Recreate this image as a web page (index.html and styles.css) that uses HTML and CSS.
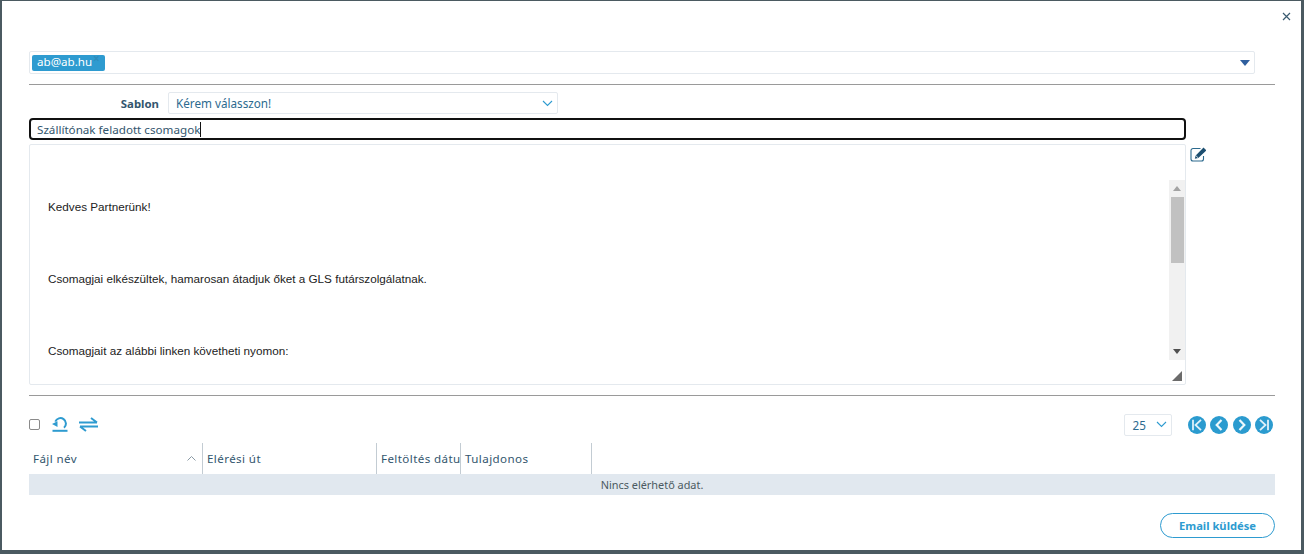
FILE: index.html
```html
<!DOCTYPE html>
<html lang="hu">
<head>
<meta charset="utf-8">
<title>Email küldése</title>
<link rel="stylesheet" href="styles.css">
</head>
<body>
<div class="modal">
  <div class="close-row">
    <svg class="close" width="9" height="9" viewBox="0 0 9 9"><path d="M1 1l7 7M8 1L1 8" stroke="#3b5b70" stroke-width="1.200" fill="none"/></svg>
  </div>
  <div class="recipients">
    <span class="tag">ab@ab.hu<span class="tag-x">×</span></span>
    <svg class="caret" width="10" height="6" viewBox="0 0 10 6"><path d="M0 0h10L5 6z" fill="#2f5f9e"/></svg>
  </div>
  <div class="rule rule-top"></div>
  <div class="template-row">
    <label class="template-label">Sablon</label>
    <div class="select template-select">
      <span>Kérem válasszon!</span>
      <svg width="11" height="7" viewBox="0 0 11 7"><path d="M1 1l4.500 4.500L10 1" stroke="#2e9bd0" stroke-width="1.100" fill="none"/></svg>
    </div>
  </div>
  <div class="subject"><span>Szállítónak feladott csomagok</span><span class="cursor"></span></div>
  <div class="editor-row">
    <div class="editor">
      <div class="editor-body">
        <div class="editor-text">
          <p>Kedves Partnerünk!</p>
          <p>Csomagjai elkészültek, hamarosan átadjuk őket a GLS futárszolgálatnak.</p>
          <p>Csomagjait az alábbi linken követheti nyomon:</p>
        </div>
        <div class="scrollbar">
          <svg class="sb-arrow" width="8" height="5" viewBox="0 0 8 5"><path d="M0 5h8L4 0z" fill="#a3a3a3"/></svg>
          <div class="sb-thumb"></div>
          <svg class="sb-arrow sb-down" width="8" height="5" viewBox="0 0 8 5"><path d="M0 0h8L4 5z" fill="#505050"/></svg>
        </div>
      </div>
      <div class="editor-foot">
        <svg width="10" height="10" viewBox="0 0 10 10"><path d="M10 0v10H0z" fill="#6b6b6b"/></svg>
      </div>
    </div>
    <svg class="edit-icon" width="17" height="15" viewBox="0 0 17 15">
      <path d="M10.500 1.500H3A2 2 0 0 0 1 3.500v8.500a2 2 0 0 0 2 2h8.500a2 2 0 0 0 2-2V9" stroke="#2c6a8e" stroke-width="1.100" fill="none"/>
      <path d="M4.800 11.800l.9-3.300L12.800 1.200c.5-.5 1-.5 1.400 0l1.600 1.500c.4.400.4.900 0 1.300L8.300 11z" fill="#1d4f70"/>
      <path d="M5.700 8.500l2.600 2.500" stroke="#fff" stroke-width=".8"/>
    </svg>
  </div>
  <div class="rule rule-mid"></div>
  <div class="toolbar">
    <span class="check"></span>
    <svg class="tool-a" width="16" height="15" viewBox="0 0 16 15">
      <path d="M3.300 4.600A5.500 5.500 0 1 1 12 10.800" stroke="#2e9bd0" stroke-width="2" fill="none"/>
      <path d="M0 7L5.500 4.200V10z" fill="#2e9bd0"/>
      <path d="M0.500 13.800h15" stroke="#2e9bd0" stroke-width="2"/>
    </svg>
    <svg class="tool-b" width="19" height="15" viewBox="0 0 19 15">
      <path d="M0 5.500h18M12 1l6 4.500M19 9.500H1M7 14L1 9.500" stroke="#2e9bd0" stroke-width="2" fill="none"/>
    </svg>
    <div class="pager">
      <div class="select size-select">
        <span>25</span>
        <svg width="11" height="7" viewBox="0 0 11 7"><path d="M1 1l4.500 4.500L10 1" stroke="#2e9bd0" stroke-width="1.100" fill="none"/></svg>
      </div>
      <div class="pager-btns">
        <svg width="18" height="18" viewBox="0 0 18 18"><circle cx="9" cy="9" r="9" fill="#2b9bcf"/><path d="M5 3.800v10.400M13 3.800L7.500 9l5.500 5.200" stroke="#dff1fa" stroke-width="1.800" fill="none"/></svg>
        <svg width="18" height="18" viewBox="0 0 18 18"><circle cx="9" cy="9" r="9" fill="#2b9bcf"/><path d="M11.500 4L6.700 9l4.800 5" stroke="#eef8fc" stroke-width="2.200" fill="none"/></svg>
        <svg width="18" height="18" viewBox="0 0 18 18"><circle cx="9" cy="9" r="9" fill="#2b9bcf"/><path d="M6.500 4L11.300 9l-4.800 5" stroke="#eef8fc" stroke-width="2.200" fill="none"/></svg>
        <svg width="18" height="18" viewBox="0 0 18 18"><circle cx="9" cy="9" r="9" fill="#2b9bcf"/><path d="M13 3.800v10.400M5 3.800L10.500 9L5 14.200" stroke="#dff1fa" stroke-width="1.800" fill="none"/></svg>
      </div>
    </div>
  </div>
  <div class="thead">
    <div class="th th-name"><span>Fájl név</span>
      <svg width="9" height="5" viewBox="0 0 9 5"><path d="M.5 4.500l4-4 4 4" stroke="#8a9aa5" fill="none"/></svg>
    </div>
    <div class="th th-path"><span>Elérési út</span></div>
    <div class="th th-date"><span>Feltöltés dátuma</span></div>
    <div class="th th-owner"><span>Tulajdonos</span></div>
  </div>
  <div class="empty">Nincs elérhető adat.</div>
  <div class="actions"><button class="send" type="button">Email küldése</button></div>
</div>
</body>
</html>
```
FILE: styles.css
```css
* { box-sizing: border-box; }
html, body { margin: 0; padding: 0; }
body {
  width: 1304px;
  height: 554px;
  overflow: hidden;
  background: #4b5a61;
  font-family: "Noto Sans", "Open Sans", sans-serif;
  font-size: 11.700px;
  color: #33566e;
  padding: 1px 3px 4px 2px;
}
.modal {
  height: 549px;
  background: #fff;
  padding: 0 26px 0 27px;
  display: flex;
  flex-direction: column;
}
.close-row { height: 50px; display: flex; justify-content: flex-end; align-items: flex-start; margin-right: -16px; padding-top: 11px; }
.recipients {
  height: 23px;
  width: 1226px;
  border: 1px solid #e4e9ee;
  border-radius: 2px;
  display: flex;
  align-items: center;
  justify-content: space-between;
  padding: 0 4px 0 2px;
}
.tag {
  width: 73px;
  height: 16px;
  background: #2e9bd0;
  color: #fff;
  border-radius: 2px;
  font-size: 11.600px;
  line-height: 14px;
  padding-left: 5px;
  position: relative;
}
.tag-x { position: absolute; left: 61px; top: -3px; color: #2d8cbc; font-weight: 700; }
.rule { height: 1px; background: #9a9a9a; }
.rule-top { margin-top: 10px; }
.template-row { margin-top: 7px; height: 22px; display: flex; align-items: center; }
.template-label { width: 130px; text-align: right; font-weight: 700; font-size: 11.400px; color: #33566e; }
.select {
  height: 22px;
  border: 1px solid #e4e9ee;
  border-radius: 2px;
  display: flex;
  align-items: center;
  justify-content: space-between;
  color: #2d6a8f;
}
.template-select { width: 390px; margin-left: 9px; padding: 0 4px 0 7px; }
.subject {
  margin-top: 4px;
  width: 1157px;
  height: 22px;
  border: 2px solid #111;
  border-radius: 4px;
  padding-left: 6px;
  display: flex;
  align-items: center;
  font-size: 11.650px;
  color: #33566e;
}
.cursor { width: 1px; height: 15px; background: #111; }
.editor-row { margin-top: 4px; display: flex; align-items: flex-start; }
.editor {
  width: 1157px;
  height: 241px;
  border: 1px solid #e4e9ee;
  border-radius: 2px;
  padding-top: 35px;
  display: flex;
  flex-direction: column;
}
.editor-body { height: 180px; display: flex; justify-content: space-between; }
.editor-text { font-family: "Liberation Sans", Arial, sans-serif; font-size: 11.700px; color: #222; padding: 20px 0 0 18px; }
.editor-text p { margin: 0 0 58px; line-height: 14px; }
.scrollbar {
  width: 16px;
  background: #f1f1f1;
  display: flex;
  flex-direction: column;
  align-items: center;
  padding-top: 6px;
}
.sb-thumb { width: 13px; height: 66px; margin-top: 6px; background: #c1c1c1; }
.sb-down { margin-top: auto; margin-bottom: 6px; }
.editor-foot { flex: 1; display: flex; justify-content: flex-end; padding: 11px 3px 0 0; }
.edit-icon { margin: 3px 0 0 4px; }
.rule-mid { margin-top: 10px; }
.toolbar { height: 47px; display: flex; align-items: center; position: relative; padding-top: 10px; }
.check { width: 11px; height: 11px; border: 1px solid #8a8a8a; border-radius: 2px; }
.tool-a { margin-left: 12px; }
.tool-b { margin-left: 11px; }
.pager { margin-left: auto; display: flex; align-items: center; }
.size-select { width: 48px; padding: 0 4px 0 8px; }
.pager-btns { display: flex; gap: 4.500px; margin-left: 16px; margin-right: 2px; }
.thead { display: flex; height: 31px; font-size: 11.600px; letter-spacing: .4px; color: #33566e; }
.th { position: relative; display: flex; align-items: center; justify-content: space-between; padding-left: 4px; border-right: 1px solid #c3ccd3; white-space: nowrap; overflow: hidden; }
.th-name { width: 174px; padding-right: 6px; }
.th-path { width: 174px; }
.th-date { width: 84px; }
.th-owner { width: 131px; }
.empty { height: 21px; background: #e1e8ef; text-align: center; font-size: 10.900px; line-height: 21px; color: #4b5a61; }
.actions { margin-top: 18px; display: flex; justify-content: flex-end; }
.send {
  width: 115px;
  height: 25px;
  border: 1px solid #2e9bd0;
  border-radius: 13px;
  background: #fff;
  color: #2e9bd0;
  font-family: "Noto Sans", sans-serif;
  font-size: 11.200px;
  font-weight: 700;
  padding: 0;
}
```
